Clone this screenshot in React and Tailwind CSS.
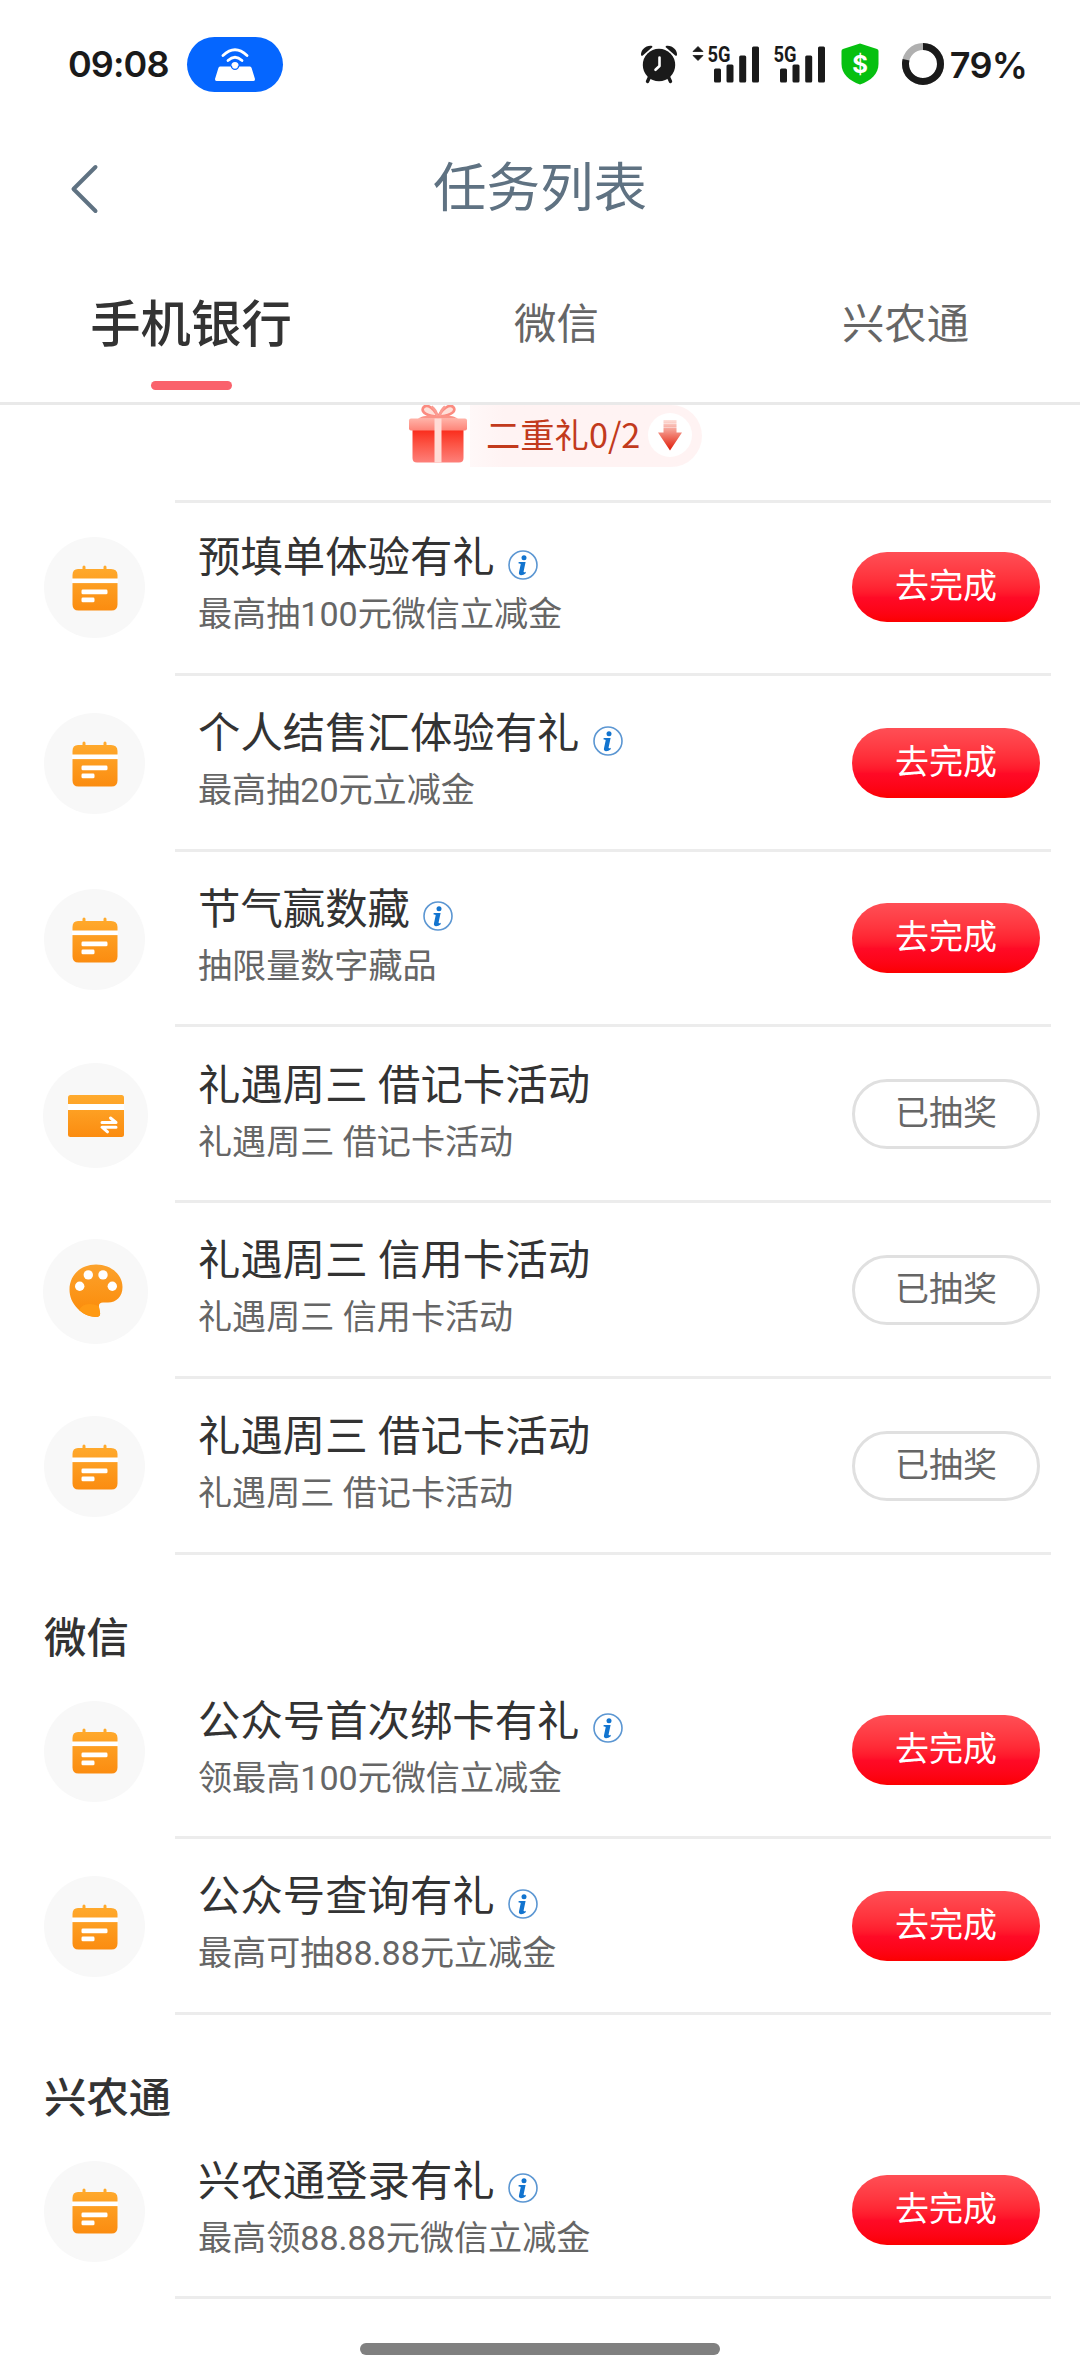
import React, { useState } from 'react';

const tabs = [
  { name: '手机银行', width: 'w-[382px]' },
  { name: '微信', width: 'w-[349px]' },
  { name: '兴农通', width: 'w-[349px]' },
];

const bankTasks = [
  { icon: 'calendar', title: '预填单体验有礼', desc: '最高抽100元微信立减金', info: true },
  { icon: 'calendar', title: '个人结售汇体验有礼', desc: '最高抽20元立减金', info: true },
  { icon: 'calendar', title: '节气赢数藏', desc: '抽限量数字藏品', info: true },
  { icon: 'card', title: '礼遇周三 借记卡活动', desc: '礼遇周三 借记卡活动', done: true },
  { icon: 'palette', title: '礼遇周三 信用卡活动', desc: '礼遇周三 信用卡活动', done: true },
  { icon: 'calendar', title: '礼遇周三 借记卡活动', desc: '礼遇周三 借记卡活动', done: true },
];

const wechatTasks = [
  { icon: 'calendar', title: '公众号首次绑卡有礼', desc: '领最高100元微信立减金', info: true },
  { icon: 'calendar', title: '公众号查询有礼', desc: '最高可抽88.88元立减金', info: true },
];

const xntTasks = [
  { icon: 'calendar', title: '兴农通登录有礼', desc: '最高领88.88元微信立减金', info: true },
];

const Signal = ({ arrows }) => (
  <svg width="68" height="56" viewBox="0 -8 68 56" fill="#1a1a1a">
    {arrows && <path d="M2 7.5 L7 2.5 L12 7.5 Z M2 11.5 H12 L7 16.5 Z" stroke="#1a1a1a" strokeWidth="0.8" strokeLinejoin="round" />}
    <text x="16.5" y="17.6" fontFamily="Roboto, sans-serif" fontWeight="700" fontSize="21.5" textLength="23" lengthAdjust="spacingAndGlyphs">5G</text>
    <rect x="23" y="24.5" width="7" height="14" rx="1.5" />
    <rect x="35.5" y="20.5" width="7" height="18" rx="1.5" />
    <rect x="48.2" y="11.5" width="7" height="27" rx="1.5" />
    <rect x="61" y="2.5" width="7" height="36" rx="1.5" />
  </svg>
);

const StatusBar = () => (
  <div className="h-[120px] flex items-start justify-between pl-[68px] pr-[53px] font-['Inter',sans-serif] font-semibold text-[36px] text-[#1a1a1a]">
    <div className="flex items-center mt-[37px]">
      <span className="w-[119px] mb-[1px] leading-[53px] tracking-[-0.9px]">09:08</span>
      <div className="w-[96px] h-[55px] rounded-[28px] bg-[#0566ff] flex items-center justify-center">
        <svg width="42" height="34" viewBox="0 0 42 34" fill="none">
          <path d="M6 18.5 H36 Q37.2 18.5 37.6 20 L41 31 Q41.2 33 39.5 33 H2.5 Q0.8 33 1 31 L4.4 20 Q4.8 18.5 6 18.5 Z" fill="#fff" />
          <path d="M9 7.5 Q21 -4 33 7.5" stroke="#fff" strokeWidth="2.8" strokeLinecap="round" />
          <path d="M14 12.5 Q21 6 28 12.5" stroke="#fff" strokeWidth="2.8" strokeLinecap="round" />
          <circle cx="21" cy="17.5" r="3.6" fill="#fff" />
          <path d="M17.4 17.8 a3.6 3.6 0 0 0 7.2 0" stroke="#0566ff" strokeWidth="1.3" />
        </svg>
      </div>
    </div>
    <div className="flex items-center mt-[44px] h-[40px]">
      <svg width="38" height="40" viewBox="0 0 38 40" fill="#1a1a1a">
        <path d="M1 11.5 C0.5 6 6 1 12 2 L12.5 3 L2.5 11.8 Z" />
        <path d="M37 11.5 C37.5 6 32 1 26 2 L25.5 3 L35.5 11.8 Z" />
        <path d="M10 32 L7.5 37.5 M28 32 L30.5 37.5" stroke="#1a1a1a" strokeWidth="3.4" strokeLinecap="round" />
        <circle cx="19" cy="21" r="16.2" />
        <path d="M19.5 13.5 V22 L15.5 25.8" stroke="#fff" strokeWidth="2.6" strokeLinecap="round" strokeLinejoin="round" fill="none" />
      </svg>
      <div className="ml-[13px]"><Signal arrows /></div>
      <div className="-ml-[2px]"><Signal /></div>
      <svg className="ml-[16px]" width="38" height="42" viewBox="0 0 38 42">
        <path d="M19 0.5 L36 6 Q37.5 6.5 37.5 8 V21 C37.5 31 30 37.5 19 41.5 C8 37.5 0.5 31 0.5 21 V8 Q0.5 6.5 2 6 Z" fill="#06c010" />
        <text x="19" y="29.5" textAnchor="middle" fontFamily="Inter, sans-serif" fontWeight="700" fontSize="24" fill="#fff">$</text>
      </svg>
      <svg className="ml-[23px]" width="42" height="42" viewBox="0 0 42 42" fill="none">
        <circle cx="21" cy="21" r="17.5" stroke="#b0b0b0" strokeWidth="7" />
        <circle cx="21" cy="21" r="17.5" stroke="#1a1a1a" strokeWidth="7" pathLength="100" strokeDasharray="79 21" transform="rotate(-90 21 21)" />
      </svg>
      <span className="ml-[6px] mt-[1px] leading-[40px] tracking-[-0.8px]">79%</span>
    </div>
  </div>
);

const CalendarIcon = () => (
  <svg width="46" height="46" viewBox="0 0 46 46">
    <defs>
      <linearGradient id="cal" x1="0" y1="0" x2="0" y2="1">
        <stop offset="0" stopColor="#ffab2e" />
        <stop offset="1" stopColor="#fb8c10" />
      </linearGradient>
    </defs>
    <path d="M6 4 H10.5 V2 Q10.5 0.5 12 0.5 Q13.5 0.5 13.5 2 V4 H31.5 V2 Q31.5 0.5 33 0.5 Q34.5 0.5 34.5 2 V4 H39 Q45.5 4 45.5 10 V39.5 Q45.5 45.5 39.5 45.5 H6.5 Q0.5 45.5 0.5 39.5 V10 Q0.5 4 6 4 Z" fill="url(#cal)" />
    <rect x="0" y="13.5" width="46" height="4.6" fill="#fff" />
    <rect x="9.5" y="24.5" width="26" height="4.8" rx="1.4" fill="#fff" />
    <rect x="9.5" y="32.5" width="13" height="4.8" rx="1.4" fill="#fff" />
  </svg>
);

const CardIcon = () => (
  <svg width="56" height="48" viewBox="0 0 56 48">
    <defs>
      <linearGradient id="card" x1="0" y1="0" x2="0" y2="1">
        <stop offset="0" stopColor="#ffab2e" />
        <stop offset="1" stopColor="#fb8c10" />
      </linearGradient>
    </defs>
    <rect y="3" width="56" height="42" rx="2.5" fill="url(#card)" />
    <rect y="12" width="56" height="6" fill="#fff" />
    <path d="M34 30.5 H48 L42.5 26 M48 35.2 H34 L39.5 39.8" stroke="#fff" strokeWidth="3" fill="none" strokeLinecap="round" strokeLinejoin="round" />
  </svg>
);

const PaletteIcon = () => (
  <svg width="54" height="54" viewBox="0 0 54 54">
    <defs>
      <linearGradient id="pal" x1="0" y1="0" x2="0" y2="1">
        <stop offset="0" stopColor="#fca22c" />
        <stop offset="1" stopColor="#fb8a08" />
      </linearGradient>
    </defs>
    <path d="M27 0.5 C42 0.5 53.5 10.5 53.5 23 C53.5 32.5 47.5 38.5 39 38.5 H34 C30.5 38.5 29.3 40.5 30.2 44.5 L31 48.5 C31.6 51.5 30 53 27 53 C19 52.5 13 49.5 8.5 44.5 C3 38.5 0.5 32.5 0.5 25.5 C0.5 11 12 0.5 27 0.5 Z" fill="url(#pal)" />
    <path d="M10 46 Q15 36.5 29.9 42 L31 48.5 C31.6 51.5 30 53 27 53 Q17 52.3 10 46 Z" fill="#ff9a14" />
    <circle cx="19.3" cy="10.9" r="4.7" fill="#fff" />
    <circle cx="34" cy="10.9" r="4.7" fill="#fff" />
    <circle cx="10.7" cy="22.3" r="4.7" fill="#fff" />
    <circle cx="43.3" cy="22.3" r="4.7" fill="#fff" />
  </svg>
);

const InfoIcon = () => (
  <svg width="30" height="30" viewBox="0 0 30 30">
    <circle cx="15" cy="15" r="14" fill="none" stroke="#5b96d2" strokeWidth="1.6" />
    <circle cx="16" cy="7.8" r="2.5" fill="#1274cf" />
    <path d="M10.6 12 H17.6 L15.6 21.6 Q15.4 23 17.9 21.8 L17.5 23.4 Q15.5 25.2 13.1 25.2 Q10.4 25 11 22.3 L12.7 14.2 Q12.8 13.4 10.6 13.5 Z" fill="#1274cf" />
  </svg>
);

const GiftIcon = () => (
  <svg width="60" height="60" viewBox="0 0 60 60">
    <defs>
      <linearGradient id="box" x1="0" y1="0" x2="0" y2="1">
        <stop offset="0" stopColor="#fa2c1c" />
        <stop offset="0.45" stopColor="#fc5546" />
        <stop offset="1" stopColor="#fd807a" />
      </linearGradient>
      <linearGradient id="lid" x1="0" y1="0" x2="0" y2="1">
        <stop offset="0" stopColor="#ffb3a8" />
        <stop offset="1" stopColor="#fd8478" />
      </linearGradient>
    </defs>
    <path d="M30 11.5 C23 -1 17 -0.5 15 3 C13 7.5 20 11.5 30 11.5 C40 11.5 48 7.5 46 3 C44 -0.5 38 -1 30 11.5 Z" fill="#ffdfd8" stroke="#fb8b80" strokeWidth="2.6" />
    <path d="M28 10.5 C20 9.5 13 11.5 10 13.8 H50 C47 11.5 40 9.5 32 10.5 Z" fill="#fb9488" />
    <path d="M23.5 1.5 Q28 4.5 29.2 11 M37 1.5 Q33 4.5 31.8 11" stroke="#fb9c92" strokeWidth="2.6" fill="none" />
    <path d="M4.5 25 H55.5 V53 Q55.5 57.5 51 57.5 H9 Q4.5 57.5 4.5 53 Z" fill="url(#box)" />
    <rect x="1" y="13.5" width="58" height="12" rx="2" fill="url(#lid)" />
    <rect x="26.5" y="13.5" width="7" height="44" fill="#ffdcd6" />
  </svg>
);

const ArrowIcon = () => (
  <svg width="24" height="32" viewBox="0 0 24 32">
    <defs>
      <linearGradient id="arrow" x1="0" y1="0" x2="0" y2="1">
        <stop offset="0" stopColor="#fde0da" />
        <stop offset="0.5" stopColor="#f0796a" />
        <stop offset="1" stopColor="#e01a08" />
      </linearGradient>
    </defs>
    <path d="M5.5 1 H18.5 V13.5 H24 L12 31.5 L0 13.5 H5.5 Z" fill="url(#arrow)" />
    <path d="M5 4.5 H19 M5 8.5 H19" stroke="#fff" strokeOpacity="0.4" strokeWidth="1" />
  </svg>
);

const TaskIcon = ({ type }) => {
  if (type === 'calendar') {
    return (
      <div className="w-[101px] h-[101px] mb-[37.4px] rounded-full bg-[#f8f8f8] flex items-center justify-center">
        <CalendarIcon />
      </div>
    );
  }
  return (
    <div className="w-[105px] h-[105px] -ml-[1px] mb-[35px] rounded-full bg-[#f8f8f8] flex items-center justify-center">
      {type === 'card' ? <CardIcon /> : <PaletteIcon />}
    </div>
  );
};

const TaskRow = ({ task, first }) => (
  <div className={`flex items-end ${first ? 'h-[172.8px]' : 'h-[175.8px]'}`}>
    <div className="w-[175px] shrink-0 pl-[44px]">
      <TaskIcon type={task.icon} />
    </div>
    <div className="flex-1 mr-[29px] pl-[23px] pr-[11px] flex items-end justify-between border-b-[3px] border-[#ececec]">
      <div className="mb-[37.5px]">
        <div className="flex items-center h-[50px] mb-[11px]">
          <span className="mt-[2px] text-[42.4px] leading-[50px] text-[#333] whitespace-nowrap">{task.title}</span>
          {task.info && <div className="ml-[13px] mt-[15px]"><InfoIcon /></div>}
        </div>
        <div className="text-[34.1px] leading-[42px] text-[#666] whitespace-nowrap">{task.desc}</div>
      </div>
      {task.done ? (
        <button className="w-[188px] h-[70px] mb-[51px] rounded-full border-[3px] border-[#e0e0e0] text-[34px] leading-[62px] text-[#666]">
          <span className="block -mt-[2px]">已抽奖</span>
        </button>
      ) : (
        <button className="w-[188px] h-[70px] mb-[51px] rounded-full bg-linear-to-b from-[#ff4e55] via-[#ff0a26] via-65% to-[#fc0000] text-[34px] leading-[68px] text-white">
          <span className="block -mt-[2px]">去完成</span>
        </button>
      )}
    </div>
  </div>
);

const Section = ({ title, tasks }) => (
  <div>
    {title && (
      <h2 className="h-[108.5px] pl-[44px] pt-[59px] text-[42.4px] leading-[50px] font-medium text-[#333]">{title}</h2>
    )}
    {tasks.map((task, i) => (
      <TaskRow key={i} task={task} first={!title && i === 0} />
    ))}
  </div>
);

export default function App() {
  const [activeTab, setActiveTab] = useState(0);

  return (
    <div className="w-[1080px] h-[2376px] bg-white overflow-hidden flex flex-col font-['Roboto','Noto_Sans_CJK_SC',sans-serif]">
      <StatusBar />

      {/* HEADER */}
      <div className="h-[134px] grid grid-cols-3 items-center pl-[70px] pr-[70px] text-[#5f7282]">
        <svg width="30" height="50" viewBox="0 0 30 50" fill="none" className="mt-[4px]">
          <path d="M25.5 3 L3.5 25 L25.5 47" stroke="currentColor" strokeWidth="4" strokeLinecap="round" strokeLinejoin="round" />
        </svg>
        <h1 className="mt-[4px] text-[53.5px] leading-[64px] text-center">任务列表</h1>
      </div>

      {/* TABS */}
      <div className="h-[151px] shrink-0 flex border-b-[3px] border-[#e9e9e9]">
        {tabs.map((tab, i) => (
          <button
            key={tab.name}
            onClick={() => setActiveTab(i)}
            className={`${tab.width} flex flex-col items-center justify-between pt-[40px] pb-[12px]`}
          >
            <span className={activeTab === i ? 'text-[50.4px] leading-[62px] font-medium text-[#333]' : 'text-[42.4px] leading-[62px] text-[#666]'}>
              {tab.name}
            </span>
            {activeTab === i && <span className="w-[81px] h-[9px] rounded-full bg-[#fa626c]" />}
          </button>
        ))}
      </div>

      {/* GIFT BADGE */}
      <div className="h-[95px] shrink-0 flex items-start pl-[408px]">
        <GiftIcon />
        <div className="ml-[2px] w-[232px] h-[62px] rounded-r-[32px] bg-linear-to-r from-[#fff8f8] to-[#fff3f3] to-15% flex items-center justify-between pl-[16px] pr-[10px]">
          <span className="font-['Noto_Sans_CJK_SC',sans-serif] mb-[6px] text-[34.3px] leading-[56px] text-[#c23a1c] whitespace-nowrap">二重礼0/2</span>
          <div className="w-[44px] h-[44px] mb-[3px] rounded-full bg-white flex items-center justify-center">
            <ArrowIcon />
          </div>
        </div>
      </div>
      <div className="h-[3px] shrink-0 ml-[175px] mr-[29px] bg-[#ececec]" />

      {/* TASK LIST */}
      <Section tasks={bankTasks} />
      <Section title="微信" tasks={wechatTasks} />
      <Section title="兴农通" tasks={xntTasks} />

      <div className="w-[360px] h-[12px] mt-[44px] mx-auto shrink-0 rounded-full bg-[#808080]" />
    </div>
  );
}
